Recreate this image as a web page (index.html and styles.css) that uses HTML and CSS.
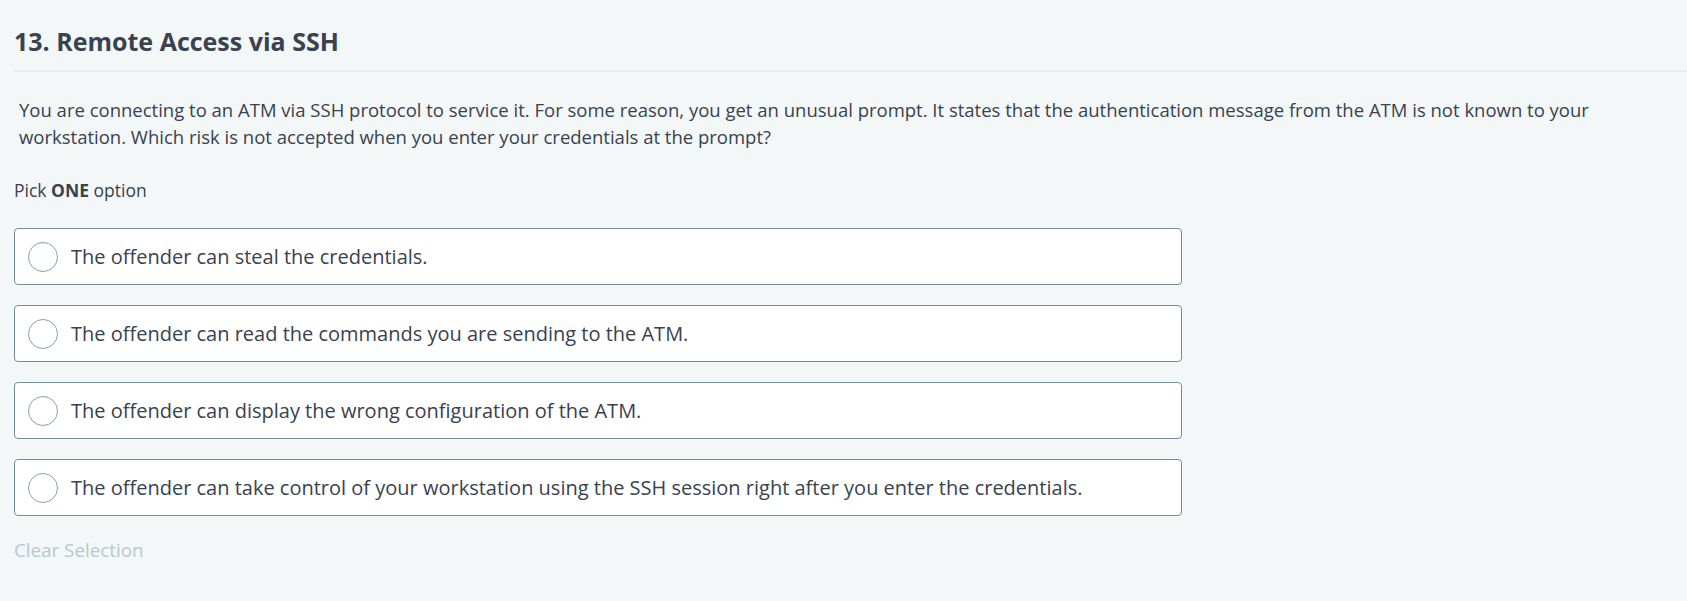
FILE: index.html
```html
<!DOCTYPE html>
<html lang="en">
<head>
<meta charset="utf-8">
<title>13. Remote Access via SSH</title>
<link rel="stylesheet" href="styles.css">
</head>
<body>
<div class="page">
  <header class="head">
    <h1 class="title">13. Remote Access via SSH</h1>
  </header>
  <p class="question">You are connecting to an ATM via SSH protocol to service it. For some reason, you get an unusual prompt. It states that the authentication message from the ATM is not known to your workstation. Which risk is not accepted when you enter your credentials at the prompt?</p>
  <p class="pick">Pick <strong>ONE</strong> option</p>
  <div class="options">
    <label class="option"><span class="radio"></span><span class="label">The offender can steal the credentials.</span></label>
    <label class="option"><span class="radio"></span><span class="label">The offender can read the commands you are sending to the ATM.</span></label>
    <label class="option"><span class="radio"></span><span class="label">The offender can display the wrong configuration of the ATM.</span></label>
    <label class="option"><span class="radio"></span><span class="label">The offender can take control of your workstation using the SSH session right after you enter the credentials.</span></label>
  </div>
  <div class="clear">Clear Selection</div>
</div>
</body>
</html>
```
FILE: styles.css
```css
html, body {
  margin: 0;
  padding: 0;
  background: #f3f7f7;
}
body {
  font-family: "Open Sans", "Noto Sans", sans-serif;
  color: #39424e;
}
.page {
  padding: 0 0 0 14px;
}
.head {
  border-bottom: 2px solid #e8eeef;
  padding-top: 24px;
  height: 46px;
}
.title {
  margin: 0;
  font-size: 25px;
  font-weight: 700;
  line-height: 34px;
  color: #39424e;
}
.question {
  margin: 24px 0 0 5px;
  font-size: 18.5px;
  line-height: 27px;
  padding-right: 20px;
}
.pick {
  margin: 28px 0 0 0;
  font-size: 17.5px;
  line-height: 24px;
}
.options {
  margin-top: 26px;
  width: 1168px;
  display: flex;
  flex-direction: column;
  gap: 20px;
}
.option {
  display: flex;
  align-items: center;
  height: 57px;
  box-sizing: border-box;
  border: 1px solid #738f93;
  border-radius: 4px;
  background: #ffffff;
  padding-left: 13px;
}
.radio {
  width: 30px;
  height: 30px;
  box-sizing: border-box;
  border: 1px solid #8a9fa3;
  border-radius: 50%;
  flex: none;
  background: #fff;
}
.label {
  margin-left: 13px;
  font-size: 20px;
}
.clear {
  margin-top: 22px;
  font-size: 18.8px;
  line-height: 24px;
  color: #b7c9cc;
}
```
